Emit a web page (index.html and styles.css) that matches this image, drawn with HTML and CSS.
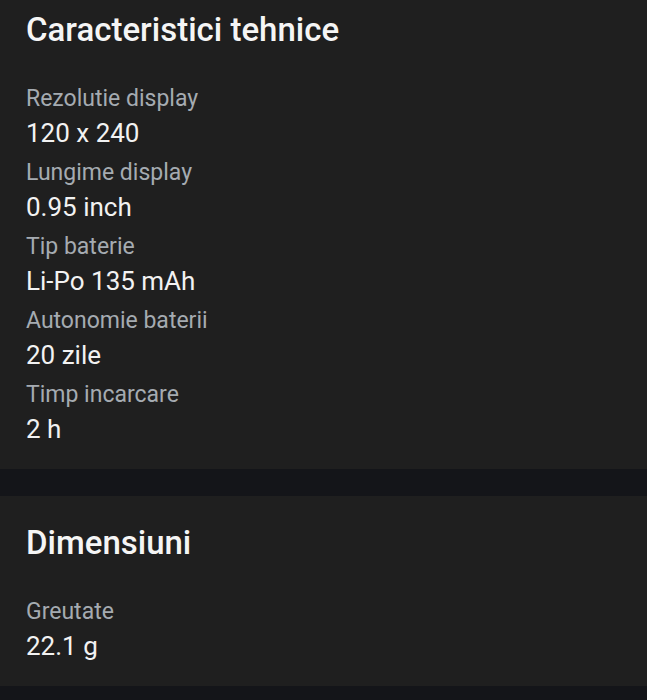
FILE: index.html
```html
<!DOCTYPE html>
<html lang="ro">
<head>
    <meta charset="UTF-8">
    <meta name="viewport" content="width=device-width, initial-scale=1.0">
    <title>Caracteristici</title>
    <link rel="stylesheet" href="styles.css">
</head>
<body>

    <!-- Caracteristici tehnice -->
    <div class="spec-card first">
        <h2 class="spec-title">Caracteristici tehnice</h2>
        <div class="spec-list">
            <div class="spec-row">
                <div class="spec-label">Rezolutie display</div>
                <div class="spec-value">120 x 240</div>
            </div>
            <div class="spec-row">
                <div class="spec-label">Lungime display</div>
                <div class="spec-value">0.95 inch</div>
            </div>
            <div class="spec-row">
                <div class="spec-label">Tip baterie</div>
                <div class="spec-value">Li-Po 135 mAh</div>
            </div>
            <div class="spec-row">
                <div class="spec-label">Autonomie baterii</div>
                <div class="spec-value">20 zile</div>
            </div>
            <div class="spec-row">
                <div class="spec-label">Timp incarcare</div>
                <div class="spec-value">2 h</div>
            </div>
        </div>
    </div>

    <!-- Dimensiuni -->
    <div class="spec-card">
        <h2 class="spec-title">Dimensiuni</h2>
        <div class="spec-list">
            <div class="spec-row">
                <div class="spec-label">Greutate</div>
                <div class="spec-value">22.1 g</div>
            </div>
        </div>
    </div>

</body>
</html>
```

FILE: styles.css
```css
/* Basic Styling */
body {
    margin: 0;
    font-family: Roboto, "Noto Sans", sans-serif;
    background-color: #141519;
    color: #f2f2f2;
}
/* Cards */
.spec-card {
    background-color: #1f1f1f;
    padding: 27px 26px 22px 26px;
    margin-bottom: 27px;
}
.spec-card.first {
    padding-top: 10px;
}
.spec-title {
    margin: 0 0 32px 0;
    font-size: 33px;
    line-height: 40px;
    font-weight: 500;
    color: #f5f5f5;
}
/* Rows */
.spec-list {
    display: flex;
    flex-direction: column;
    gap: 5px;
}
.spec-label {
    font-size: 23px;
    line-height: 33px;
    color: #a5abb1;
}
.spec-value {
    font-size: 26px;
    line-height: 36px;
    color: #f2f2f2;
}
```
